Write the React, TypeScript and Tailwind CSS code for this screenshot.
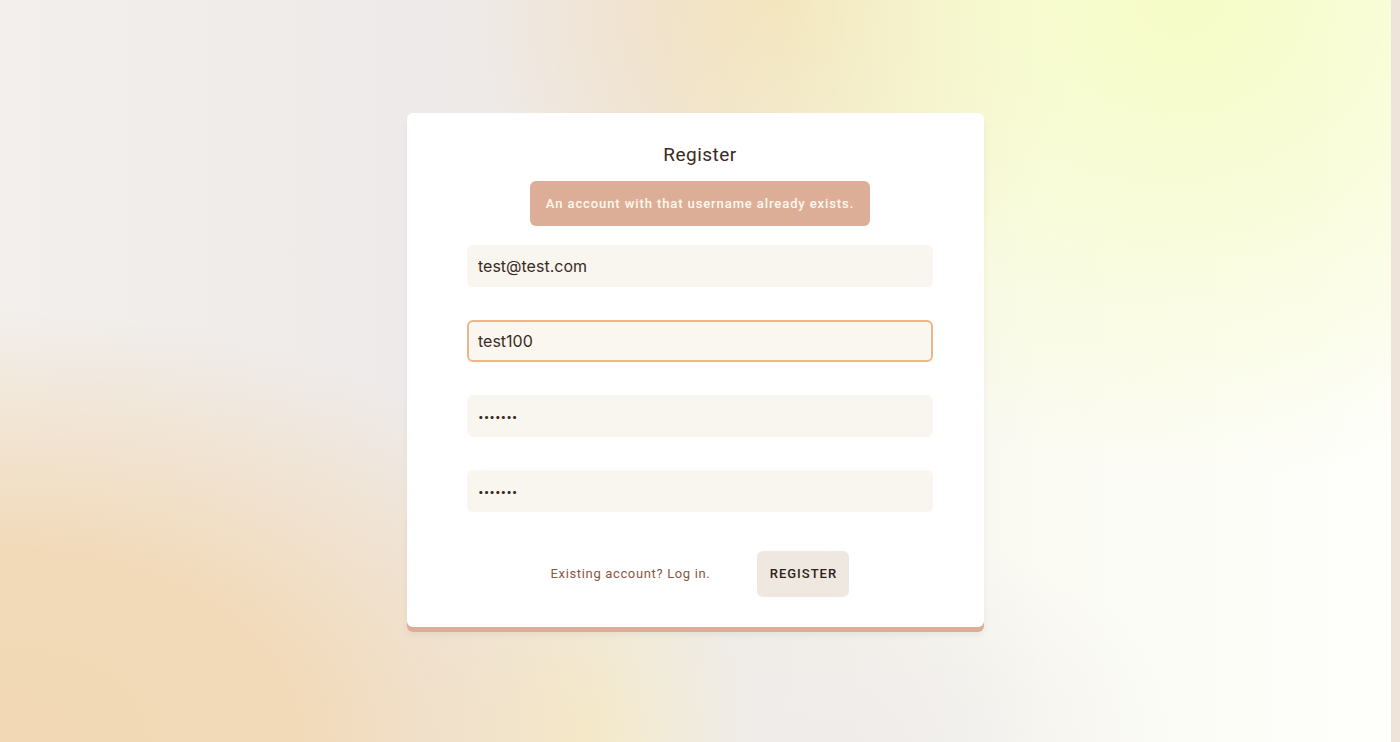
import React from 'react';

const fields = [
  { type: 'email', value: 'test@test.com', focused: false },
  { type: 'text', value: 'test100', focused: true },
  { type: 'password', value: 'secret1', focused: false },
  { type: 'password', value: 'secret1', focused: false },
];

export default function App() {
  return (
    <div className="flex h-[742px] w-full overflow-hidden font-['Roboto',sans-serif]">
      <main className="flex-1 flex items-center justify-center bg-[radial-gradient(ellipse_48%_58%_at_0%_100%,#f2d8b4_0%,#f2dab9_45%,rgba(242,218,185,0)_100%),radial-gradient(ellipse_12%_30%_at_42%_100%,rgba(246,236,200,0.9)_0%,rgba(246,236,200,0)_100%),radial-gradient(ellipse_25%_30%_at_60%_100%,#efecea_0%,rgba(239,236,234,0)_100%),radial-gradient(ellipse_40%_65%_at_85%_0%,#f6fcc6_0%,rgba(246,252,198,0.6)_45%,rgba(246,252,198,0)_100%),radial-gradient(ellipse_22%_45%_at_56%_0%,#f2dcbb_0%,rgba(242,220,187,0)_100%),linear-gradient(90deg,#f2efec_0%,#eeeae9_30%,#efeae4_50%,#fbfbf4_75%,#fefefb_100%)]">
        <div className="mb-[2px] w-[577px] rounded-md bg-white pt-[30px] pb-[30px] pl-[60px] pr-[51px] shadow-[0_5px_0_#ddae97,0_8px_6px_rgba(120,100,90,0.08)]">
          <h1 className="text-center text-[19px] leading-[24px] tracking-[0.5px] text-[#3b2a22]">
            Register
          </h1>

          <div className="mt-[14px] flex justify-center">
            <div className="flex h-[45px] w-[340px] items-center justify-center rounded-md bg-[#ddae97] text-[13px] font-medium tracking-[0.9px] text-[#fff9ee]">
              An account with that username already exists.
            </div>
          </div>

          <div className="mt-[19px] flex flex-col gap-[33px]">
            {fields.map((field, i) => (
              <input
                key={i}
                type={field.type}
                value={field.value}
                readOnly
                className={
                  field.focused
                    ? "h-[42px] w-[466px] rounded-md border-2 border-[#efb68c] bg-[#faf7f1] px-[9px] font-['Inter',sans-serif] text-[16px] text-[#3b2a22] outline-none"
                    : field.type === 'password'
                      ? "h-[42px] w-[466px] rounded-md bg-[#f9f6f0] px-[11px] font-['Inter',sans-serif] text-[10px] text-[#3b2a22] outline-none"
                      : "h-[42px] w-[466px] rounded-md bg-[#f9f6f0] px-[11px] font-['Inter',sans-serif] text-[16px] text-[#3b2a22] outline-none"
                }
              />
            ))}
          </div>

          <div className="mt-[39px] flex items-center justify-center gap-[47px]">
            <a className="text-[13px] tracking-[0.65px] text-[#8c5643]">
              Existing account? Log in.
            </a>
            <button className="h-[46px] w-[92px] rounded-md bg-[#efe8e0] text-[13px] font-medium tracking-[1px] text-[#2e221c]">
              REGISTER
            </button>
          </div>
        </div>
      </main>
      <div className="w-[9px] bg-[#efe4d9]" />
    </div>
  );
}
